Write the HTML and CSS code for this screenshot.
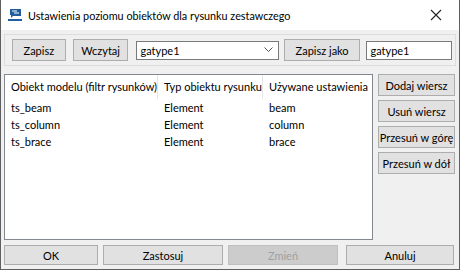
FILE: index.html
```html
<!DOCTYPE html>
<html lang="pl">
<head>
    <meta charset="UTF-8">
    <title>Ustawienia poziomu obiektów</title>
    <link rel="stylesheet" href="styles.css">
</head>
<body>
    <div class="window">
        <div class="titlebar">
            <svg class="app-icon" width="14" height="14" viewBox="0 0 14 14">
                <path d="M2 1h11v7H5l-2 2V7H2z" fill="#1f5f9e"/>
                <path d="M4 3h5M6 5h5" stroke="#fff" stroke-width="1.1"/>
                <rect x="0" y="11" width="14" height="2" fill="#1f5f9e"/>
            </svg>
            <span class="title">Ustawienia poziomu obiektów dla rysunku zestawczego</span>
            <svg class="close" width="12" height="12" viewBox="0 0 12 12">
                <path d="M1 1l10 10M11 1L1 11" stroke="#222" stroke-width="1.1"/>
            </svg>
        </div>

        <div class="content">
            <div class="toolbar">
                <button class="btn btn-save">Zapisz</button>
                <button class="btn btn-load">Wczytaj</button>
                <div class="combo">
                    <span>gatype1</span>
                    <svg width="9" height="6" viewBox="0 0 9 6"><path d="M0.5 0.5l4 4 4-4" fill="none" stroke="#555"/></svg>
                </div>
                <button class="btn btn-saveas">Zapisz jako</button>
                <div class="textbox">gatype1</div>
            </div>

            <div class="main">
                <div class="listview">
                    <div class="lv-row lv-head">
                        <div class="col c1">Obiekt modelu (filtr rysunków)</div>
                        <div class="col c2">Typ obiektu rysunku</div>
                        <div class="col c3">Używane ustawienia</div>
                    </div>
                    <div class="lv-row">
                        <div class="col c1">ts_beam</div>
                        <div class="col c2">Element</div>
                        <div class="col c3">beam</div>
                    </div>
                    <div class="lv-row">
                        <div class="col c1">ts_column</div>
                        <div class="col c2">Element</div>
                        <div class="col c3">column</div>
                    </div>
                    <div class="lv-row">
                        <div class="col c1">ts_brace</div>
                        <div class="col c2">Element</div>
                        <div class="col c3">brace</div>
                    </div>
                </div>
                <div class="side">
                    <button class="btn">Dodaj wiersz</button>
                    <button class="btn">Usuń wiersz</button>
                    <button class="btn">Przesuń w górę</button>
                    <button class="btn">Przesuń w dół</button>
                </div>
            </div>

            <div class="footer">
                <button class="btn f-ok">OK</button>
                <button class="btn f-apply">Zastosuj</button>
                <button class="btn f-change" disabled>Zmień</button>
                <button class="btn f-cancel">Anuluj</button>
            </div>
        </div>
    </div>
</body>
</html>
```

FILE: styles.css
```css
* {
    box-sizing: border-box;
}

body {
    margin: 0;
    font-family: Lato, "Liberation Sans", sans-serif;
    font-size: 11px;
    color: #000;
    background-color: #fff;
}

.window {
    width: 460px;
    height: 270px;
    background-color: #f0f0f0;
    border: 1px solid #5f5f5f;
    border-top: none;
    display: flex;
    flex-direction: column;
}

.titlebar {
    height: 30px;
    background-color: #fff;
    display: flex;
    align-items: center;
    padding: 0 12px 0 7px;
    font-size: 10.8px;
}

.app-icon {
    margin-right: 6px;
    flex-shrink: 0;
}

.title {
    flex: 1;
    color: #000;
}

.close {
    margin-right: 5px;
}

.content {
    flex: 1;
    padding: 4px 3px 3px 3px;
    display: flex;
    flex-direction: column;
}

.btn {
    font-family: inherit;
    font-size: 11px;
    color: #000;
    background-color: #e1e1e1;
    border: 1px solid #adadad;
    border-radius: 0;
    padding: 0;
    height: 22px;
    white-space: nowrap;
    cursor: pointer;
}

.btn:disabled {
    color: #a0a0a0;
    background-color: #cccccc;
    border-color: #bfbfbf;
}

.toolbar {
    height: 32px;
    border: 1px solid #dcdcdc;
    display: flex;
    align-items: center;
    padding: 0 3px 0 7px;
}

.btn-save {
    width: 54px;
}

.btn-load {
    width: 56px;
    margin-left: 7px;
}

.combo {
    width: 143px;
    height: 19px;
    margin-left: 8px;
    background-color: #fff;
    border: 1px solid #7a7a7a;
    display: flex;
    align-items: center;
    justify-content: space-between;
    padding: 0 5px 0 3px;
}

.btn-saveas {
    width: 77px;
    margin-left: 5px;
}

.textbox {
    width: 86px;
    height: 19px;
    margin-left: 6px;
    background-color: #fff;
    border: 1px solid #7a7a7a;
    padding: 0 3px;
    line-height: 17px;
}

.main {
    margin-top: 8px;
    height: 166px;
    display: flex;
}

.listview {
    width: 369px;
    background-color: #fff;
    border: 1px solid #828790;
}

.lv-row {
    display: flex;
    height: 17px;
    line-height: 17px;
}

.lv-head {
    height: 24px;
    line-height: 24px;
}

.col {
    padding-left: 6px;
    white-space: nowrap;
}

.lv-head .col {
    border-right: 1px solid #e5e5e5;
}

.lv-head .c3 {
    border-right: none;
}

.c1 {
    width: 153px;
}

.c2 {
    width: 105px;
}

.c3 {
    flex: 1;
}

.side {
    margin-left: 5px;
    display: flex;
    flex-direction: column;
    gap: 4px;
}

.side .btn {
    width: 77px;
    height: 22px;
}

.footer {
    margin-top: 5px;
    display: flex;
    height: 20px;
}

.footer .btn {
    height: 20px;
}

.f-ok {
    width: 94px;
}

.f-apply {
    width: 120px;
    margin-left: 5px;
}

.f-change {
    width: 110px;
    margin-left: 5px;
}

.f-cancel {
    width: 108px;
    margin-left: 8px;
}
```
